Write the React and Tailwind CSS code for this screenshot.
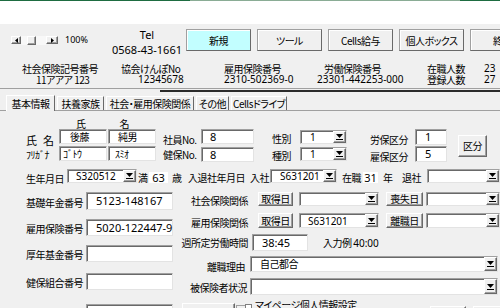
import React from 'react'

// MSForms-style controls
const sunken = 'bg-white border border-t-[#a0a0a0] border-l-[#a0a0a0] border-r-[#e3e3e3] border-b-[#e3e3e3] shadow-[inset_1px_1px_0_#696969]'
const raised = 'bg-[#f0f0f0] border border-t-white border-l-white border-r-[#696969] border-b-[#696969] shadow-[inset_-1px_-1px_0_#a0a0a0]'
const num = "font-['Noto_Sans',sans-serif] tracking-normal"

function Field({ className = '', children }) {
  return <div className={`${sunken} flex items-center shrink-0 ${className}`}>{children}</div>
}

function Drop() {
  return (
    <div className={`${raised} ml-auto w-[13px] h-full shrink-0 flex flex-col items-center justify-center gap-[1px]`}>
      <svg width="7" height="4" viewBox="0 0 7 4"><path d="M0 0H7L3.5 4Z" fill="#000" /></svg>
      <div className="w-[7px] h-px bg-black" />
    </div>
  )
}

function Combo({ className = '', children }) {
  return (
    <div className={`${sunken} flex items-center shrink-0 ${className}`}>
      <span className="leading-none">{children}</span>
      <Drop />
    </div>
  )
}

function Btn({ className = '', children }) {
  return <div className={`${raised} flex items-center justify-center shrink-0 ${className}`}>{children}</div>
}

function TopBtn({ cyan, children }) {
  return (
    <div className={`w-[65px] h-[22px] shrink-0 flex items-center justify-center border border-[#a0a0a0] border-r-[#696969] border-b-[#696969] shadow-[inset_1px_1px_0_#fff] ${cyan ? 'bg-[#c2feff]' : 'bg-[#f0f0f0]'}`}>
      {children}
    </div>
  )
}

function Tri({ left }) {
  return (
    <svg width="3" height="5" viewBox="0 0 3 5">
      <path d={left ? 'M3 0V5L0 2.5Z' : 'M0 0V5L3 2.5Z'} fill="#000" />
    </svg>
  )
}

const tabs = [
  { label: '扶養家族', w: 'w-[47px]' },
  { label: '社会・雇用保険関係', w: 'w-[88px]' },
  { label: 'その他', w: 'w-[33px]' },
  { label: 'Cellsドライブ', w: 'w-[56px]' },
]

export default function App() {
  return (
    <div className="w-[500px] h-[308px] overflow-hidden whitespace-nowrap flex flex-col bg-[#f0f0f0] text-black text-[10px] tracking-[-0.5px] [font-feature-settings:'palt'] font-['Noto_Sans_CJK_JP',sans-serif]">
      {/* ribbon edge */}
      <div className="h-px flex shrink-0">
        <div className="w-[190px] bg-[#1e6c41]" />
        <div className="w-[270px] bg-[#8aac95]" />
        <div className="flex-1 bg-[#1e6c41]" />
      </div>
      <div className="h-[23px] bg-white shrink-0" />

      {/* toolbar */}
      <div className="mt-[5px] h-[22px] flex items-center shrink-0">
        <div className="w-[111px] shrink-0 flex items-center pl-[11px]">
          <div className={`${raised} w-[10px] h-[8px] flex items-center justify-center`}><Tri left /></div>
          <div className="w-[25px] h-[9px] bg-[#f8f8f8] flex items-center pl-[6px]">
            <div className={`${raised} w-[9px] h-[9px]`} />
          </div>
          <div className={`${raised} w-[12px] h-[8px] flex items-center justify-center`}><Tri /></div>
          <span className={`ml-[7px] text-[9px] ${num}`}>100%</span>
        </div>
        <div className={`w-[72px] shrink-0 flex flex-col items-center mt-[4px] leading-[15px] text-[11px] ${num}`}>
          <span>Tel</span>
          <span>0568-43-1661</span>
        </div>
        <div className="ml-[3px] flex gap-[6px] shrink-0">
          <TopBtn cyan>新規</TopBtn>
          <TopBtn>ツール</TopBtn>
          <TopBtn>Cells給与</TopBtn>
          <TopBtn>個人ボックス</TopBtn>
          <TopBtn>終了</TopBtn>
        </div>
      </div>

      {/* insurance numbers */}
      <div className="mt-[12px] leading-[11px] shrink-0">
        <div className="h-[11px] flex">
          <span className="ml-[22px] w-[99px] shrink-0">社会保険記号番号</span>
          <span className="w-[103px] shrink-0">協会けんぽNo</span>
          <span className="w-[100px] shrink-0">雇用保険番号</span>
          <span className="w-[103px] shrink-0">労働保険番号</span>
          <span className="w-[57px] shrink-0">在職人数</span>
          <span className={num}>23</span>
        </div>
        <div className="h-[11px] flex">
          <span className="ml-[36px] w-[102px] shrink-0">11アアア 123</span>
          <span className={`w-[86px] shrink-0 ${num}`}>12345678</span>
          <span className={`w-[93px] shrink-0 ${num}`}>2310-502369-0</span>
          <span className={`w-[110px] shrink-0 ${num}`}>23301-442253-000</span>
          <span className="w-[57px] shrink-0">登録人数</span>
          <span className={num}>27</span>
        </div>
      </div>

      <div className="mt-[3px] h-px bg-[#a0a0a0] shrink-0" />
      <div className="mt-px h-[2px] flex shrink-0">
        <div className="ml-[160px] flex-1 bg-[#2b2b2b]" />
      </div>

      {/* tabs */}
      <div className="h-[18px] flex items-end pl-[6px] shrink-0 relative z-10">
        <div className="w-[49px] h-[16px] -mb-px bg-[#f0f0f0] border-t border-l border-white border-r border-r-[#696969] flex items-center justify-center">基本情報</div>
        {tabs.map(t => (
          <div key={t.label} className={`${t.w} h-[14px] ml-[2px] shrink-0 border-t border-l border-white border-r border-r-[#696969] flex items-center justify-center`}>
            {t.label}
          </div>
        ))}
      </div>
      <div className="h-px bg-[#a0a0a0] shrink-0" />

      {/* name heads */}
      <div className="mt-[8px] h-[10px] flex leading-[10px] shrink-0">
        <span className="ml-[76px]">氏</span>
        <span className="ml-[34px]">名</span>
      </div>

      {/* name / numbers / kubun */}
      <div className="flex items-center shrink-0">
        <div className="flex flex-col gap-[1px]">
          <div className="h-[16px] flex leading-[10px]">
            <div className="w-[59px] pl-[26px] shrink-0 flex items-end text-[11px]">
              <span className="w-[17px]">氏</span><span>名</span>
            </div>
            <Field className="w-[48px] h-[15px] pl-[10px]">後藤</Field>
            <Field className="w-[48px] h-[15px] ml-px pl-[9px]">純男</Field>
            <div className="w-[45px] pl-[7px] shrink-0 flex items-end">社員No.</div>
            <Field className={`w-[53px] h-[15px] pl-[8px] text-[11px] ${num}`}>8</Field>
            <div className="w-[46px] pl-[18px] shrink-0 flex items-end pb-px">性別</div>
            <Combo className={`w-[47px] h-[14px] mt-px pl-[9px] ${num}`}>1</Combo>
            <div className="w-[68px] pl-[23px] shrink-0 flex items-end">労保区分</div>
            <Field className={`w-[32px] h-[16px] pl-[9px] text-[11px] ${num}`}>1</Field>
          </div>
          <div className="h-[16px] flex leading-[10px]">
            <div className="w-[59px] pl-[26px] shrink-0 flex items-center pt-[2px]">ﾌﾘｶﾞﾅ</div>
            <Field className="w-[48px] h-[15px] pl-[3px]">ｺﾞﾄｳ</Field>
            <Field className="w-[48px] h-[15px] ml-px pl-[6px]">ｽﾐｵ</Field>
            <div className="w-[45px] pl-[7px] shrink-0 flex items-center pt-[2px]">健保No.</div>
            <Field className={`w-[53px] h-[15px] mt-px pl-[8px] text-[11px] ${num}`}>8</Field>
            <div className="w-[46px] pl-[18px] shrink-0 flex items-center pt-[3px]">種別</div>
            <Combo className={`w-[47px] h-[14px] mt-px pl-[9px] ${num}`}>1</Combo>
            <div className="w-[68px] pl-[23px] shrink-0 flex items-end">雇保区分</div>
            <Field className={`w-[32px] h-[16px] pl-[9px] text-[11px] ${num}`}>5</Field>
          </div>
        </div>
        <Btn className="ml-[11px] w-[29px] h-[22px]">区分</Btn>
      </div>

      {/* birth / join */}
      <div className="mt-[7px] h-[14px] flex leading-[10px] shrink-0">
        <div className="w-[67px] pl-[26px] shrink-0 flex items-end -mb-[1px]">生年月日</div>
        <Combo className={`w-[70px] h-[14px] pl-[8px] ${num}`}>S320512</Combo>
        <div className="w-[12px] pl-px shrink-0 flex items-end">満</div>
        <div className={`w-[19px] h-[11px] mt-[3px] bg-white shrink-0 flex items-center justify-center text-[11px] ${num}`}>63</div>
        <div className="w-[20px] pl-[4px] shrink-0 flex items-end">歳</div>
        <div className="w-[62px] shrink-0 flex items-end">入退社年月日</div>
        <div className="w-[20px] shrink-0 flex items-end">入社</div>
        <Combo className={`w-[67px] h-[14px] pl-[9px] ${num}`}>S631201</Combo>
        <div className="w-[26px] pl-[5px] shrink-0 flex items-end">在職</div>
        <div className={`w-[15px] h-[11px] mt-[3px] bg-white shrink-0 flex items-center justify-center text-[11px] ${num}`}>31</div>
        <div className="w-[24px] pl-[5px] shrink-0 flex items-end">年</div>
        <div className="w-[25px] shrink-0 flex items-end">退社</div>
        <Combo className="w-[73px] h-[14px]" />
      </div>

      {/* lower section */}
      <div className="mt-[9px] flex shrink-0 leading-[10px]">
        <div className="w-[180px] shrink-0 flex flex-col">
          <div className="h-[18px] flex">
            <div className="w-[86px] pl-[26px] shrink-0 flex items-end pb-[2px]">基礎年金番号</div>
            <Field className={`w-[87px] h-[18px] pl-[9px] text-[11px] ${num}`}>5123-148167</Field>
          </div>
          <div className="mt-[9px] h-[17px] flex">
            <div className="w-[86px] pl-[26px] shrink-0 flex items-end pb-[2px]">雇用保険番号</div>
            <Field className={`w-[87px] h-[17px] pl-[9px] text-[11px] ${num}`}>5020-122447-9</Field>
          </div>
          <div className="mt-[9px] h-[17px] flex">
            <div className="w-[86px] pl-[26px] shrink-0 flex items-end pb-[2px]">厚年基金番号</div>
            <Field className="w-[87px] h-[17px]" />
          </div>
          <div className="mt-[11px] h-[17px] flex">
            <div className="w-[86px] pl-[26px] shrink-0 flex items-end pb-[2px]">健保組合番号</div>
            <Field className="w-[87px] h-[17px]" />
          </div>
        </div>

        <div className="flex-1 flex flex-col">
          <div className="h-[14px] flex">
            <div className="w-[70px] pr-[2px] shrink-0 flex items-end justify-end">社会保険関係</div>
            <Btn className="ml-[8px] w-[35px] h-[14px]">取得日</Btn>
            <Combo className="ml-[6px] w-[80px] h-[14px]" />
            <Btn className="ml-[7px] w-[37px] h-[14px]">喪失日</Btn>
            <Combo className="ml-[3px] w-[74px] h-[14px]" />
          </div>
          <div className="mt-[7px] h-[15px] flex">
            <div className="w-[70px] pr-[2px] shrink-0 flex items-end justify-end">雇用保険関係</div>
            <Btn className="ml-[8px] w-[35px] h-[15px]">取得日</Btn>
            <Combo className={`ml-[6px] w-[80px] h-[15px] pl-[8px] ${num}`}>S631201</Combo>
            <Btn className="ml-[7px] w-[37px] h-[15px]">離職日</Btn>
            <Combo className="ml-[3px] w-[74px] h-[15px]" />
          </div>
          <div className="mt-[6px] h-[17px] flex items-center">
            <div className="w-[70px] pr-[2px] shrink-0 flex justify-end pt-[1px]">週所定労働時間</div>
            <Field className={`ml-[2px] w-[56px] h-[17px] pl-[9px] text-[11px] ${num}`}>38:45</Field>
            <span className="ml-[15px]">入力例 <span className={num}>40:00</span></span>
          </div>
          <div className="mt-[5px] h-[16px] flex">
            <div className="w-[70px] pr-[5px] shrink-0 flex items-end justify-end">離職理由</div>
            <Combo className="w-[248px] h-[16px] pl-[9px]">自己都合</Combo>
          </div>
          <div className="mt-[6px] h-[17px] flex">
            <div className="w-[70px] pr-[3px] shrink-0 flex items-end justify-end pb-[2px]">被保険者状況</div>
            <Combo className="w-[248px] h-[17px]" />
          </div>
        </div>
      </div>

      {/* bottom row */}
      <div className="mt-[3px] h-[12px] flex shrink-0 leading-[12px]">
        <Field className="ml-[86px] mt-[6px] w-[87px] h-[17px]" />
        <Btn className="ml-[9px] mt-[5px] w-[53px] h-[17px]" />
        <div className="ml-px mt-[7px] w-[9px] h-[10px] border-l border-t border-[#a0a0a0] shrink-0" />
        <div className="mt-[6px] w-[7px] h-[7px] bg-white border border-[#808080] shrink-0" />
        <span className="ml-[3px] mt-[1px] shrink-0">マイページ個人情報設定</span>
        <div className="ml-[3px] flex-1 flex flex-col">
          <div className="mt-[7px] h-px bg-[#a0a0a0]" />
          <div className="mt-px flex">
            <Btn className="ml-[70px] w-[36px] h-[10px]" />
            <Btn className="ml-[7px] w-[40px] h-[10px]" />
          </div>
        </div>
      </div>
    </div>
  )
}
